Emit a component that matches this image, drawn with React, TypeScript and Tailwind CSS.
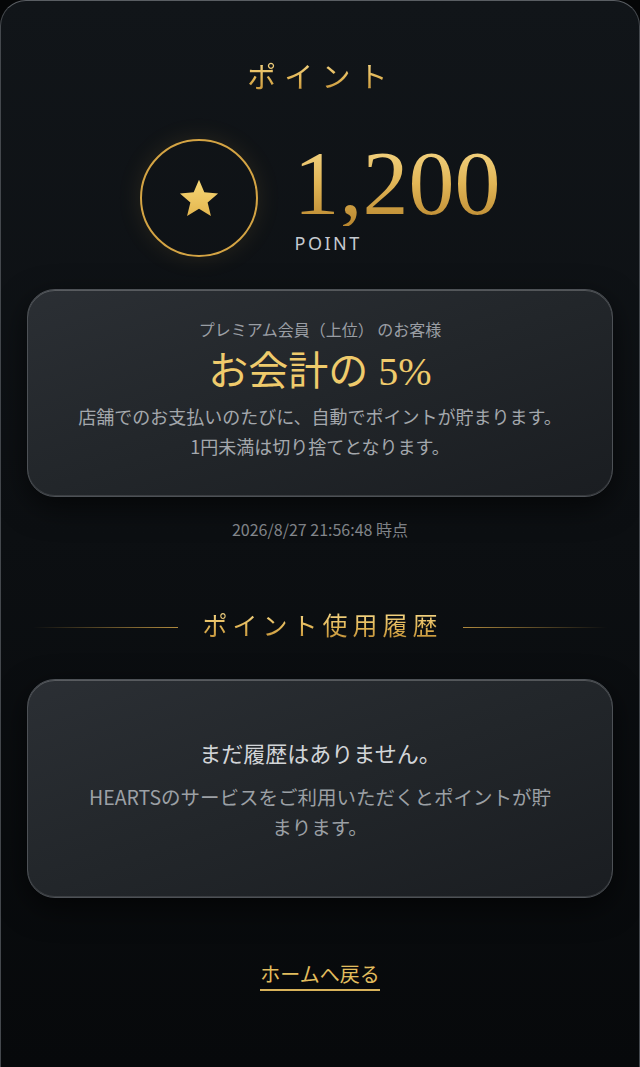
import React from "react";

const goldText =
  "bg-gradient-to-b from-[#f6d98a] via-[#e2b656] to-[#b8862e] bg-clip-text text-transparent";

function Star() {
  return (
    <svg width="44" height="44" viewBox="0 0 24 24" aria-hidden="true">
      <defs>
        <linearGradient id="sg" x1="0" y1="0" x2="0" y2="1">
          <stop offset="0" stopColor="#f7d877" />
          <stop offset="1" stopColor="#e4b64f" />
        </linearGradient>
      </defs>
      <polygon
        points="12,2 14.9,8.9 22.4,9.6 16.7,14.5 18.5,21.8 12,17.9 5.5,21.8 7.3,14.5 1.6,9.6 9.1,8.9"
        fill="url(#sg)"
      />
    </svg>
  );
}

function Card({ children, className = "" }: { children: React.ReactNode; className?: string }) {
  return (
    <div
      className={
        "relative rounded-[28px] border border-[#4d5156] bg-gradient-to-br from-[#2b2f34] via-[#22262a] to-[#1a1d21] shadow-[inset_0_1px_0_rgba(255,255,255,0.22),inset_0_-1px_0_rgba(255,255,255,0.12),0_10px_30px_rgba(0,0,0,0.6)] " +
        className
      }
    >
      {children}
    </div>
  );
}

export default function App() {
  return (
    <div className="min-h-[1067px] bg-[#050607]">
      <div
        className="h-[1067px] rounded-t-[26px] border border-b-0 border-[#44484d] border-t-[#5a5e63] bg-gradient-to-b from-[#111519] via-[#0c0f12] to-[#07090b] px-[26px] pt-[58px] text-center"
        style={{ fontFamily: "'Noto Sans CJK JP', 'Noto Sans', sans-serif" }}
      >
        <h1
          className={"text-[29px] leading-[38px] tracking-[0.28em] pl-[0.1em] " + goldText}
          style={{ fontFamily: "'Liberation Serif', 'Noto Sans CJK JP', serif" }}
        >
          ポイント
        </h1>

        <div className="mt-[42px] flex items-start justify-center gap-[36px]">
          <div className="flex h-[118px] w-[118px] items-center justify-center rounded-full border-[2.5px] border-[#d4a444] shadow-[0_0_24px_rgba(212,164,68,0.12)]">
            <Star />
          </div>
          <div className="flex flex-col items-start pt-[1px]">
            <div
              className={"text-[92px] leading-[86px] " + goldText}
              style={{ fontFamily: "'Liberation Serif', serif" }}
            >
              1,200
            </div>
            <div
              className="mt-[6px] pl-[1px] text-[18px] leading-[22px] tracking-[0.14em] text-[#c6cad0]"
              style={{ fontFamily: "'Noto Sans', sans-serif" }}
            >
              POINT
            </div>
          </div>
        </div>

        <Card className="mt-[32px] px-6 pt-[27px] pb-[35px]">
          <div className="text-[16px] leading-[24px] text-[#9a9ea4]">プレミアム会員（上位） のお客様</div>
          <div
            className="mt-[8px] text-[40px] leading-[46px] text-[#efcb6c]"
            style={{ fontFamily: "'Liberation Serif', 'Noto Sans CJK JP', serif" }}
          >
            お会計の 5%
          </div>
          <div className="mt-[6px] text-[18px] leading-[30px] text-[#a4a8ad]">
            店舗でのお支払いのたびに、自動でポイントが貯まります。
            <br />
            1円未満は切り捨てとなります。
          </div>
        </Card>

        <div className="mt-[20px] text-[16px] leading-[24px] text-[#85898e]">2026/8/27 21:56:48 時点</div>

        <div className="mt-[70px] flex items-center gap-[20px] px-[6px]">
          <div className="h-px flex-1 bg-gradient-to-r from-transparent to-[#b08a3e]" />
          <h2
            className={"text-[25px] leading-[32px] tracking-[0.2em] pl-[0.2em] " + goldText}
            style={{ fontFamily: "'Liberation Serif', 'Noto Sans CJK JP', serif" }}
          >
            ポイント使用履歴
          </h2>
          <div className="h-px flex-1 bg-gradient-to-l from-transparent to-[#b08a3e]" />
        </div>

        <Card className="mt-[36px] flex h-[219px] flex-col items-center justify-center px-6">
          <div className="text-[22px] leading-[32px] text-[#d2d5d8]">まだ履歴はありません。</div>
          <div className="mt-[14px] max-w-[472px] text-[19.5px] leading-[30px] text-[#9ca0a5]">
            HEARTSのサービスをご利用いただくとポイントが貯まります。
          </div>
        </Card>

        <div className="mt-[62px]">
          <a
            href="#"
            className="inline-block border-b-2 border-[#d8b25a] pb-[1px] text-[20px] leading-[28px] text-[#e2bd5e]"
          >
            ホームへ戻る
          </a>
        </div>
      </div>
    </div>
  );
}
